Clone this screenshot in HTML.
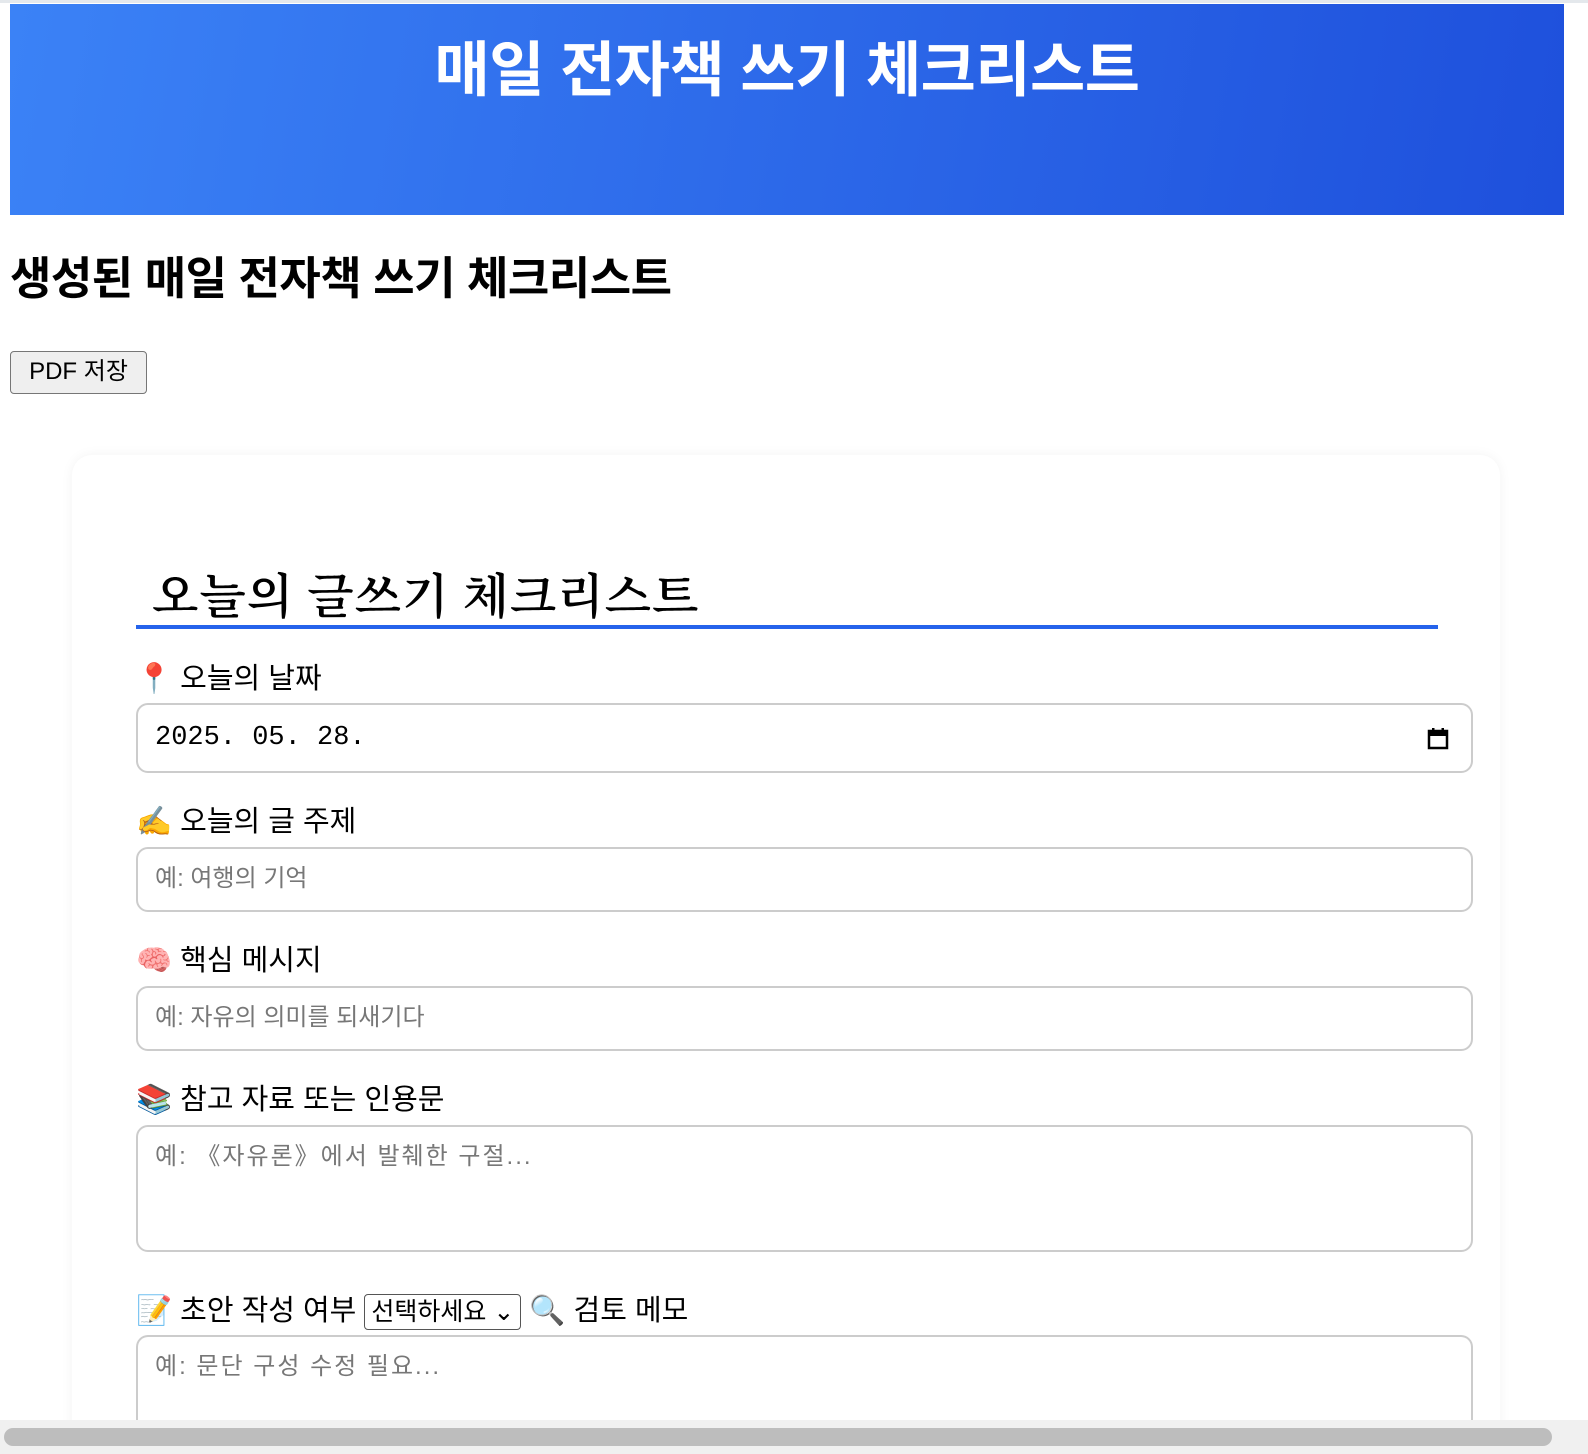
<!DOCTYPE html>
<html style="height:1454px;overflow:hidden"><head><meta charset="utf-8"><style>
*{box-sizing:border-box;margin:0;padding:0}
body{width:1588px;height:1454px;overflow:hidden;background:#fff;font-family:"Liberation Sans","Noto Sans CJK KR",sans-serif;position:relative;color:#000}
.topline{position:absolute;left:0;top:0;width:1588px;height:3px;background:#e4e8ec}
.hdr{position:absolute;left:10px;top:4px;width:1554px;height:211px;background:linear-gradient(100deg,#3b82f6,#1e50dc);color:#fff;text-align:center}
.hdr h1{font-size:60px;font-weight:700;line-height:1;margin-top:37px;letter-spacing:-0.5px}
h2{position:absolute;left:10px;top:252px;font-size:45px;font-weight:700;letter-spacing:-0.5px;line-height:1.2}
.btn{position:absolute;left:10px;top:351px;width:137px;height:43px;border:1.5px solid #767676;border-radius:4px;background:#efefef;font-size:24px;text-align:center;line-height:40px}
.card{position:absolute;left:72px;top:455px;width:1428px;height:990px;border-radius:20px;box-shadow:0 0 12px rgba(0,0,0,0.05);background:#fff}
.ttl{position:absolute;left:152px;top:564px;font-family:"Noto Serif CJK SC","Noto Serif CJK KR",serif;font-size:48px;font-weight:600;letter-spacing:1px;line-height:1.2}
.uline{position:absolute;left:136px;top:625px;width:1302px;height:4px;background:#2563eb}
.lbl{position:absolute;left:136px;font-size:29px;line-height:1.2;white-space:nowrap}
.inp{position:absolute;left:136px;width:1337px;border:2px solid #ccc;border-radius:12px;background:#fff;font-size:24px;color:#777;padding-left:17px}
.sel{display:inline-block;border:1.5px solid #555;border-radius:4px;font-size:25px;padding:2px 6px;vertical-align:middle;height:36px;line-height:30px}
.scroll{position:absolute;left:0;top:1420px;width:1588px;height:34px;background:#f0f0f0}
.scroll div{position:absolute;left:4px;top:8px;width:1548px;height:18px;background:#bdbdbd;border-radius:9px}
</style></head><body>
<div class="topline"></div>
<div class="hdr"><h1>매일 전자책 쓰기 체크리스트</h1></div>
<h2>생성된 매일 전자책 쓰기 체크리스트</h2>
<div class="btn">PDF 저장</div>
<div class="card"></div>
<div class="ttl">오늘의 글쓰기 체크리스트</div>
<div class="uline"></div>
<div class="lbl" style="top:662px">📍 오늘의 날짜</div>
<div class="inp" style="top:703px;height:70px;color:#000;font-family:'Liberation Mono','DejaVu Sans Mono',monospace;font-size:27px;line-height:66px">2025. 05. 28.
<svg style="position:absolute;right:22px;top:22px" width="22" height="24" viewBox="0 0 22 24"><rect x="2" y="4" width="18" height="17" fill="none" stroke="#000" stroke-width="2.5"/><rect x="2" y="4" width="18" height="5" fill="#000"/><rect x="5" y="1" width="2.5" height="5" fill="#000"/><rect x="14.5" y="1" width="2.5" height="5" fill="#000"/></svg></div>
<div class="lbl" style="top:805px">✍️ 오늘의 글 주제</div>
<div class="inp" style="top:847px;height:65px;line-height:60px">예: 여행의 기억</div>
<div class="lbl" style="top:944px">🧠 핵심 메시지</div>
<div class="inp" style="top:986px;height:65px;line-height:60px">예: 자유의 의미를 되새기다</div>
<div class="lbl" style="top:1083px">📚 참고 자료 또는 인용문</div>
<div class="inp" style="top:1125px;height:127px;padding-top:14px;line-height:1.3;letter-spacing:2px">예: 《자유론》에서 발췌한 구절...</div>
<div class="lbl" style="top:1294px">📝 초안 작성 여부 <span class="sel">선택하세요 ⌄</span> 🔍 검토 메모</div>
<div class="inp" style="top:1335px;height:110px;padding-top:14px;line-height:1.3;letter-spacing:2px;border-bottom:none">예: 문단 구성 수정 필요...</div>
<div class="scroll"><div></div></div>
</body></html>
